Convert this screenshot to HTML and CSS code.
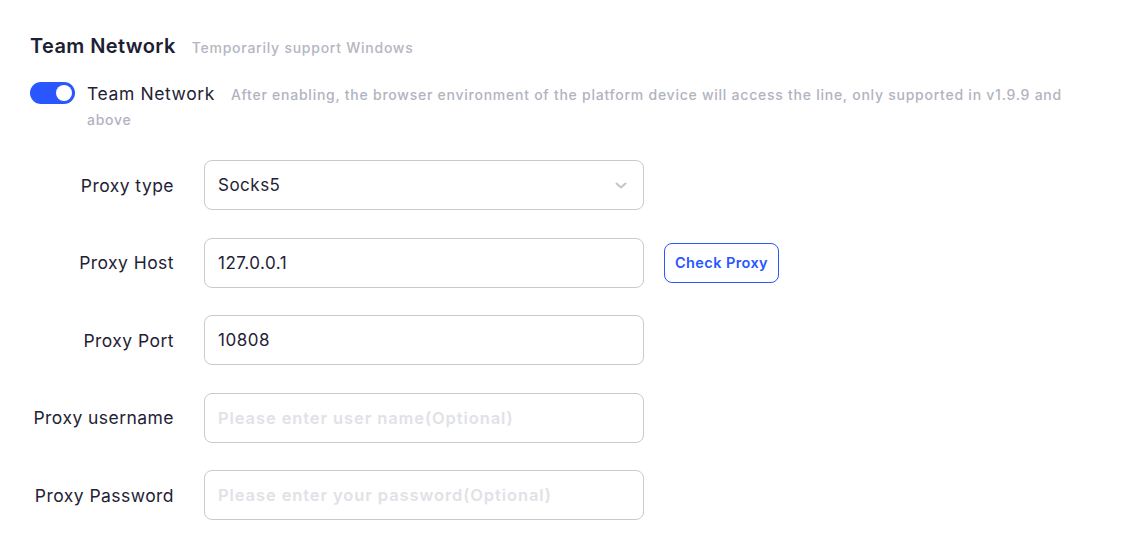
FILE: index.html
```html
<!DOCTYPE html>
<html>
<head>
<meta charset="utf-8">
<link rel="stylesheet" href="styles.css">
</head>
<body>
<div class="page">
  <div class="header">
    <span class="title">Team Network</span>
    <span class="subtitle">Temporarily support Windows</span>
  </div>
  <div class="switch-row">
    <span class="switch"><span class="knob"></span></span>
    <div class="switch-text">
      <div class="line"><span class="switch-label">Team Network</span><span class="switch-desc">After enabling, the browser environment of the platform device will access the line, only supported in v1.9.9 and</span></div>
      <div class="line switch-desc">above</div>
    </div>
  </div>
  <div class="form">
    <div class="row">
      <label class="label">Proxy type</label>
      <div class="field select"><span class="value">Socks5</span>
        <svg class="chev" width="14" height="9" viewBox="0 0 14 9"><path d="M2.5 2.5l4.5 4 4.5-4" fill="none" stroke="#c4c5cc" stroke-width="2" stroke-linecap="round" stroke-linejoin="round"/></svg>
      </div>
    </div>
    <div class="row">
      <label class="label">Proxy Host</label>
      <div class="field"><span class="value">127.0.0.1</span></div>
      <button class="btn">Check Proxy</button>
    </div>
    <div class="row">
      <label class="label">Proxy Port</label>
      <div class="field"><span class="value">10808</span></div>
    </div>
    <div class="row">
      <label class="label">Proxy username</label>
      <div class="field"><span class="ph">Please enter user name(Optional)</span></div>
    </div>
    <div class="row">
      <label class="label">Proxy Password</label>
      <div class="field"><span class="ph">Please enter your password(Optional)</span></div>
    </div>
  </div>
</div>
</body>
</html>
```
FILE: styles.css
```css
* { box-sizing: border-box; }
body {
  margin: 0;
  background: #fff;
  font-family: Inter, "Noto Sans", sans-serif;
  color: #1f2236;
}
.page {
  padding: 34px 30px 0 30px;
}
.header {
  display: flex;
  align-items: baseline;
  gap: 16px;
  height: 26px;
}
.title {
  font-size: 20px;
  font-weight: 600;
  color: #1d2034;
  letter-spacing: 0.4px;
}
.subtitle {
  font-size: 14px;
  font-weight: 500;
  color: #b4b6c2;
  letter-spacing: 0.75px;
}
.switch-row {
  display: flex;
  align-items: flex-start;
  gap: 12px;
  margin-top: 21px;
}
.switch {
  flex: none;
  width: 45px;
  height: 22px;
  border-radius: 11px;
  background: #2a56ff;
  margin-top: 1px;
  display: flex;
  justify-content: flex-end;
  align-items: center;
  padding-right: 3px;
}
.knob {
  width: 16px;
  height: 16px;
  border-radius: 50%;
  background: #fff;
}
.switch-text {
  display: flex;
  flex-direction: column;
}
.line {
  height: 25px;
  display: flex;
  align-items: center;
  white-space: nowrap;
}
.switch-label {
  font-size: 17.5px;
  color: #1f2236;
  letter-spacing: 0.6px;
  margin-right: 16px;
}
.switch-desc {
  font-size: 14px;
  font-weight: 500;
  color: #b1b3bf;
  letter-spacing: 0.75px;
  padding-top: 2px;
}
.form {
  margin-top: 29px;
  display: flex;
  flex-direction: column;
  gap: 27.5px;
}
.row {
  display: flex;
  align-items: center;
}
.label {
  width: 144px;
  text-align: right;
  font-size: 17.5px;
  letter-spacing: 0.45px;
  color: #1f2236;
  margin-right: 30px;
  white-space: nowrap;
}
.field {
  width: 440px;
  height: 50px;
  border: 1px solid #c9cad1;
  border-radius: 8px;
  display: flex;
  align-items: center;
  padding: 0 13px;
  font-size: 17px;
  letter-spacing: 0.5px;
}
.select { justify-content: space-between; padding-right: 15px; }
.value { color: #1f2236; }
.ph {
  font-weight: 600;
  color: #e1e2e7;
  font-size: 16.5px;
  letter-spacing: 0.9px;
}
.btn {
  margin-left: 20px;
  height: 40px;
  padding: 0 10px;
  border: 1px solid #2a56ff;
  border-radius: 8px;
  background: #fff;
  color: #2a56ff;
  font-family: Inter, "Noto Sans", sans-serif;
  font-size: 14.5px;
  font-weight: 600;
  letter-spacing: 0.4px;
}
```
